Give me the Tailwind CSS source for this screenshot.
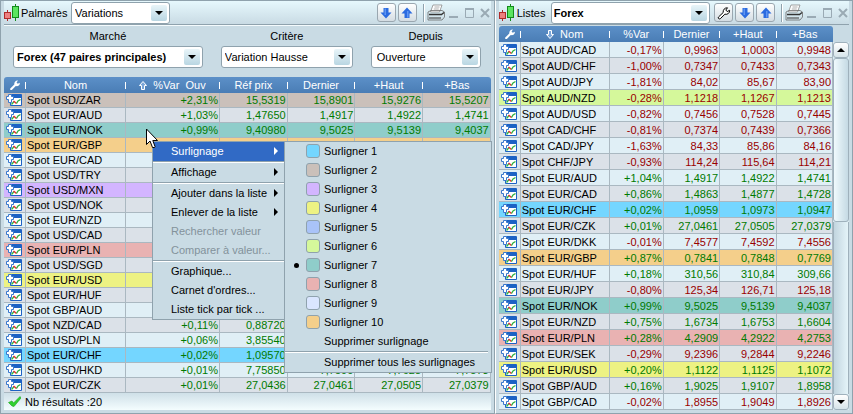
<!DOCTYPE html>
<html lang="fr">
<head>
<meta charset="utf-8">
<title>Palmarès et listes Forex</title>
<script src="https://cdn.jsdelivr.net/npm/@tailwindcss/browser@4"></script>
</head>
<body class="relative flex min-h-screen overflow-hidden bg-[#c9dbe4] font-['Liberation_Sans',Arial,sans-serif] text-[11px] leading-[14px] text-black">

<svg class="hidden" aria-hidden="true">
  <defs>
    <linearGradient id="barBlue" x1="0" y1="0" x2="1" y2="0"><stop offset="0" stop-color="#5f9fee"/><stop offset=".5" stop-color="#1458c0"/><stop offset="1" stop-color="#0a43a6"/></linearGradient>
    <linearGradient id="paperTray" x1="0" y1="0" x2="0" y2="1"><stop offset="0" stop-color="#f4f4f4"/><stop offset="1" stop-color="#8d8d8d"/></linearGradient>
  </defs>
  <symbol id="quote" viewBox="0 0 16 12">
    <rect x="4" y="0" width="12" height="12" rx="1" fill="#1c62c4"/>
    <rect x="4" y="0" width="12" height="4" rx="1" fill="url(#barBlue)"/>
    <rect x="5" y="4" width="10" height="7" fill="#fff"/>
    <path d="M5.500 10.500L8 7.500" stroke="#2fb040" stroke-width="1.300" fill="none"/>
    <path d="M7.500 7L10.500 9.500" stroke="#e63030" stroke-width="1.500" fill="none"/>
    <path d="M10.500 9.500L12 7L14.500 5.500" stroke="#2fb040" stroke-width="1.300" fill="none"/>
    <path d="M2.500 .5H5.500V2.500H7.500V5.500H5.500V8.500H2.500V5.500H.5V2.500H2.500Z" fill="#fff" stroke="#3a78cc" stroke-width="1"/>
  </symbol>
  <symbol id="candles" viewBox="0 0 16 20">
    <path d="M3.500 7V18" stroke="#b02a2a"/>
    <rect x=".5" y="9.500" width="6" height="6" fill="#ee8080" stroke="#b02a2a"/>
    <path d="M11.500 1V18" stroke="#128a1c"/>
    <rect x="8.500" y="3.500" width="6" height="11" fill="#5be45f" stroke="#128a1c"/>
  </symbol>
  <symbol id="wrench" viewBox="0 0 14 14">
    <path d="M1.500 11L6.200 6.500C5.800 4 7.600 1.600 10.500 1.800L8.800 4L10.200 5.600L12.600 4.300C13 7 10.400 8.900 7.900 8.200L3.300 12.700C2 13.500 .6 12 1.500 11Z"/>
  </symbol>
  <symbol id="arrowDown" viewBox="0 0 12 12">
    <path d="M3.500 1H8.500V5.500H11.500L6 11.500L.5 5.500H3.500Z" fill="#2b6be0"/>
    <path d="M4.500 1.500H6V8H4.500Z" fill="#5f95f2"/>
  </symbol>
  <symbol id="headArrow" viewBox="0 0 8 9">
    <path d="M2.500 .5H5.500V4.500H7.500L4 8.500L.5 4.500H2.500Z" fill="#7aa6d8" stroke="#fff"/>
  </symbol>
  <symbol id="printer" viewBox="0 0 18 17">
    <path d="M6 1H15L12.500 8H3.500Z" fill="#fff" stroke="#8a8a8a" stroke-width=".8"/>
    <path d="M7.500 3H12.500M6.800 5H11.800" stroke="#999" stroke-width=".8"/>
    <path d="M1 8L4 6.500H15L17.500 8V13L15 16H1Z" fill="url(#paperTray)" stroke="#6a6a6a" stroke-width=".8"/>
    <path d="M2 10.500H14.500L17 8.500" stroke="#333" stroke-width="1.400" fill="none"/>
    <path d="M2 14H14" stroke="#555" stroke-width="1.200"/>
  </symbol>
</svg>

<section class="flex min-w-0 flex-[496_1_0%] flex-col border-y border-l border-r border-[#8fa2ad] px-[3px] pb-[2px]">
  <header class="flex h-6 shrink-0 items-center border-b border-[#8fa2ad] bg-linear-to-b from-[#e6f8fd] to-[#c9dbe4] shadow-[0_1px_0_#f4fbfd]">
    <svg class="h-5 w-4 shrink-0"><use href="#candles"/></svg>
    <label for="view" class="ml-px w-[50px] shrink-0">Palmarès</label>
    <span class="relative w-[99px] shrink-0">
      <select id="view" class="block h-[22px] w-full appearance-none rounded-[3px] border border-[#8fa2ad] bg-white px-[3px]"><option>Variations</option></select>
      <svg class="pointer-events-none absolute top-[3px] right-[3px] size-4 rounded-[2px] bg-linear-to-b from-[#e9f5f9] to-[#b9d6e2]" viewBox="0 0 16 16"><path d="M4 6H12L8 10Z"/></svg>
    </span>
    <div class="ml-auto flex items-center">
      <button aria-label="Descendre" class="mr-[2px] flex size-[19px] items-center justify-center rounded-[3px] border border-[#9aa7b0] bg-linear-to-b from-white to-[#d4dde3]"><svg class="size-3"><use href="#arrowDown"/></svg></button>
      <button aria-label="Monter" class="mr-[6px] flex size-[19px] items-center justify-center rounded-[3px] border border-[#9aa7b0] bg-linear-to-b from-white to-[#d4dde3]"><svg class="size-3 rotate-180"><use href="#arrowDown"/></svg></button>
      <span class="mr-[2px] h-[18px] w-[2px] border-l border-[#8fa2ad] bg-white"></span>
      <button aria-label="Imprimer" class="mr-[4px]"><svg class="block h-[17px] w-[18px]"><use href="#printer"/></svg></button>
      <button aria-label="Réduire" class="mr-[6px]"><svg class="block size-[10px]" viewBox="0 0 10 10"><path d="M0 9H9" stroke="#9aaab4" stroke-width="2"/></svg></button>
      <button aria-label="Agrandir" class="mr-[5px]"><svg class="block size-[10px]" viewBox="0 0 10 10"><path d="M.5 1.500H8.500V9.500H.5Z" fill="none" stroke="#9aaab4"/><path d="M0 1H9" stroke="#9aaab4" stroke-width="2"/></svg></button>
      <button aria-label="Fermer" class="mr-px"><svg class="block size-[10px]" viewBox="0 0 10 10"><path d="M1 1L9 9M9 1L1 9" stroke="#9aaab4" stroke-width="2"/></svg></button>
    </div>
  </header>

  <div class="grid shrink-0 grid-cols-[190fr_132fr_110fr] gap-x-[18px] pt-1 pr-[10px] pb-[9px] pl-[9px]">
    <label for="market" class="text-center">Marché</label>
    <label for="criterion" class="text-center">Critère</label>
    <label for="since" class="text-center">Depuis</label>
    <span class="relative mt-[3px]">
      <select id="market" class="block h-[22px] w-full appearance-none rounded-[3px] border border-[#8fa2ad] bg-white px-[3px] font-bold"><option>Forex (47 paires principales)</option></select>
      <svg class="pointer-events-none absolute top-[3px] right-[3px] size-4 rounded-[2px] bg-linear-to-b from-[#e9f5f9] to-[#b9d6e2]" viewBox="0 0 16 16"><path d="M4 6H12L8 10Z"/></svg>
    </span>
    <span class="relative mt-[3px]">
      <select id="criterion" class="block h-[22px] w-full appearance-none rounded-[3px] border border-[#8fa2ad] bg-white px-[3px]"><option>Variation Hausse</option></select>
      <svg class="pointer-events-none absolute top-[3px] right-[3px] size-4 rounded-[2px] bg-linear-to-b from-[#e9f5f9] to-[#b9d6e2]" viewBox="0 0 16 16"><path d="M4 6H12L8 10Z"/></svg>
    </span>
    <span class="relative mt-[3px]">
      <select id="since" class="block h-[22px] w-full appearance-none rounded-[3px] border border-[#8fa2ad] bg-white px-[5px]"><option>Ouverture</option></select>
      <svg class="pointer-events-none absolute top-[3px] right-[3px] size-4 rounded-[2px] bg-linear-to-b from-[#e9f5f9] to-[#b9d6e2]" viewBox="0 0 16 16"><path d="M4 6H12L8 10Z"/></svg>
    </span>
  </div>

  <table class="w-full table-fixed border-separate border-spacing-0">
    <colgroup><col class="w-[22px]"><col class="w-[100px]"><col class="w-[94px]"><col><col><col><col></colgroup>
    <thead>
      <tr class="h-4 text-white [&>th]:bg-linear-to-b [&>th]:from-[#5c90c8] [&>th]:to-[#4a7db5] [&>th]:p-0 [&>th]:font-normal">
        <th class="rounded-tl-[3px]"><span class="flex h-4 items-center justify-end"><svg class="mr-1 size-3 fill-white"><use href="#wrench"/></svg><i class="h-[7px] w-px bg-white"></i></span></th>
        <th><span class="flex h-4 items-center"><b class="flex-1 font-normal">Nom</b><i class="h-[7px] w-px bg-white"></i></span></th>
        <th><span class="flex h-4 items-center"><b class="flex flex-1 items-center justify-center gap-[6px] font-normal"><svg class="h-[9px] w-2 rotate-180"><use href="#headArrow"/></svg><span>%Var&nbsp; Ouv</span></b><i class="h-[7px] w-px bg-white"></i></span></th>
        <th><span class="flex h-4 items-center"><b class="flex-1 font-normal">Réf prix</b><i class="h-[7px] w-px bg-white"></i></span></th>
        <th><span class="flex h-4 items-center"><b class="flex-1 font-normal">Dernier</b><i class="h-[7px] w-px bg-white"></i></span></th>
        <th><span class="flex h-4 items-center"><b class="flex-1 font-normal">+Haut</b><i class="h-[7px] w-px bg-white"></i></span></th>
        <th class="rounded-tr-[3px]">+Bas</th>
      </tr>
    </thead>
    <tbody id="ranking"></tbody>
  </table>

  <footer class="flex h-[17px] shrink-0 items-center bg-linear-to-b from-[#cfe0e8] to-[#f4fdfe] pl-1">
    <svg class="mr-1 h-[11px] w-[13px]" viewBox="0 0 13 11"><path d="M.5 6.500L4 5L5.500 7L12 .5L13 2L6 10.500L4 10Z" fill="#2fd02f" stroke="#1ca51c" stroke-width=".6"/></svg>
    <span>Nb résultats :20</span>
  </footer>
</section>

<section class="flex min-w-0 flex-[357_1_0%] flex-col border-y border-r border-l border-y-[#8fa2ad] border-r-[#8fa2ad] border-l-white pr-[3px] pb-[3px] pl-[3px]">
  <header class="flex h-6 shrink-0 items-center border-b border-[#8fa2ad] bg-linear-to-b from-[#e6f8fd] to-[#c9dbe4]">
    <svg class="h-5 w-4 shrink-0"><use href="#candles"/></svg>
    <label for="list" class="ml-[2px] w-[34px] shrink-0">Listes</label>
    <span class="relative mr-[4px] min-w-0 flex-1">
      <select id="list" class="block h-[22px] w-full appearance-none rounded-[3px] border border-[#8fa2ad] bg-white px-[2px] font-bold"><option>Forex</option></select>
      <svg class="pointer-events-none absolute top-[3px] right-[3px] size-4 rounded-[2px] bg-linear-to-b from-[#e9f5f9] to-[#b9d6e2]" viewBox="0 0 16 16"><path d="M4 6H12L8 10Z"/></svg>
    </span>
    <div class="flex items-center">
      <button aria-label="Paramètres" class="mr-[2px] flex size-[19px] items-center justify-center rounded-[3px] border border-[#9aa7b0] bg-linear-to-b from-white to-[#d4dde3]"><svg class="size-[14px] fill-white stroke-black"><use href="#wrench"/></svg></button>
      <button aria-label="Descendre" class="mr-[2px] flex size-[19px] items-center justify-center rounded-[3px] border border-[#9aa7b0] bg-linear-to-b from-white to-[#d4dde3]"><svg class="size-3"><use href="#arrowDown"/></svg></button>
      <button aria-label="Monter" class="mr-[6px] flex size-[19px] items-center justify-center rounded-[3px] border border-[#9aa7b0] bg-linear-to-b from-white to-[#d4dde3]"><svg class="size-3 rotate-180"><use href="#arrowDown"/></svg></button>
      <span class="mr-[2px] h-[18px] w-[2px] border-l border-[#8fa2ad] bg-white"></span>
      <button aria-label="Imprimer" class="mr-[4px]"><svg class="block h-[17px] w-[18px]"><use href="#printer"/></svg></button>
      <button aria-label="Réduire" class="mr-[6px]"><svg class="block size-[10px]" viewBox="0 0 10 10"><path d="M0 9H9" stroke="#9aaab4" stroke-width="2"/></svg></button>
      <button aria-label="Agrandir" class="mr-[5px]"><svg class="block size-[10px]" viewBox="0 0 10 10"><path d="M.5 1.500H8.500V9.500H.5Z" fill="none" stroke="#9aaab4"/><path d="M0 1H9" stroke="#9aaab4" stroke-width="2"/></svg></button>
      <button aria-label="Fermer" class="mr-px"><svg class="block size-[10px]" viewBox="0 0 10 10"><path d="M1 1L9 9M9 1L1 9" stroke="#9aaab4" stroke-width="2"/></svg></button>
    </div>
  </header>

  <div class="mt-px flex">
    <table class="min-w-0 flex-1 table-fixed border-separate border-spacing-0">
      <colgroup><col class="w-[22px]"><col class="w-[89px]"><col class="w-[54px]"><col><col><col></colgroup>
      <thead>
        <tr class="h-4 text-white [&>th]:bg-linear-to-b [&>th]:from-[#5c90c8] [&>th]:to-[#4a7db5] [&>th]:p-0 [&>th]:font-normal">
          <th class="rounded-tl-[3px]"><span class="flex h-4 items-center justify-end"><svg class="mr-1 size-3 fill-white"><use href="#wrench"/></svg><i class="h-[7px] w-px bg-white"></i></span></th>
          <th><span class="flex h-4 items-center"><b class="flex flex-1 items-center justify-center gap-[6px] font-normal"><svg class="h-[9px] w-2"><use href="#headArrow"/></svg><span>Nom</span></b><i class="h-[7px] w-px bg-white"></i></span></th>
          <th><span class="flex h-4 items-center"><b class="flex-1 font-normal">%Var</b><i class="h-[7px] w-px bg-white"></i></span></th>
          <th><span class="flex h-4 items-center"><b class="flex-1 font-normal">Dernier</b><i class="h-[7px] w-px bg-white"></i></span></th>
          <th><span class="flex h-4 items-center"><b class="flex-1 font-normal">+Haut</b><i class="h-[7px] w-px bg-white"></i></span></th>
          <th class="rounded-tr-[3px]">+Bas</th>
        </tr>
      </thead>
      <tbody id="quotes"></tbody>
    </table>
    <div class="mt-4 flex w-4 shrink-0 flex-col bg-[#dbecf3]">
      <button aria-label="Défiler vers le haut" class="flex h-4 shrink-0 items-center justify-center rounded-[3px] border border-[#9fb1bc] bg-linear-to-b from-white to-[#d6e4ea]"><svg class="h-1 w-2" viewBox="0 0 8 4"><path d="M0 4H8L4 0Z"/></svg></button>
      <div class="flex-[163_1_0%] rounded-[3px] border border-[#9fb1bc] bg-linear-to-r from-[#f0fafd] to-[#c5dae4]"></div>
      <div class="flex-[173_1_0%] border-x border-[#9fb1bc] bg-linear-to-r from-[#c2d5df] to-[#e4f4f9]"></div>
      <button aria-label="Défiler vers le bas" class="flex h-4 shrink-0 items-center justify-center rounded-[3px] border border-[#9fb1bc] bg-linear-to-b from-white to-[#d6e4ea]"><svg class="h-1 w-2" viewBox="0 0 8 4"><path d="M0 0H8L4 4Z"/></svg></button>
    </div>
  </div>
</section>

<!-- Context menu and its highlight submenu -->
<ul role="menu" class="absolute top-[141px] left-[152px] w-[133px] border border-[#8fa2ad] bg-[#c9dbe4] [&_button]:flex [&_button]:h-[19px] [&_button]:w-full [&_button]:items-center [&_button]:justify-between [&_button]:pr-[6px] [&_button]:pb-px [&_button]:pl-[18px]">
  <li class="border-b border-[#8fa2ad] bg-[#316ac5] text-white"><button role="menuitem">Surlignage<svg class="h-2 w-1 fill-white" viewBox="0 0 4 8"><path d="M0 0L4 4L0 8Z"/></svg></button></li>
  <li class="border-y border-t-white border-b-[#8fa2ad]"><button role="menuitem">Affichage<svg class="h-2 w-1" viewBox="0 0 4 8"><path d="M0 0L4 4L0 8Z"/></svg></button></li>
  <li class="border-t border-white"><button role="menuitem">Ajouter dans la liste<svg class="h-2 w-1" viewBox="0 0 4 8"><path d="M0 0L4 4L0 8Z"/></svg></button></li>
  <li><button role="menuitem">Enlever de la liste<svg class="h-2 w-1" viewBox="0 0 4 8"><path d="M0 0L4 4L0 8Z"/></svg></button></li>
  <li class="text-[#83929b]"><button role="menuitem" disabled>Rechercher valeur</button></li>
  <li class="border-b border-[#8fa2ad] text-[#83929b]"><button role="menuitem" disabled>Comparer à valeur...</button></li>
  <li class="border-t border-white"><button role="menuitem">Graphique...</button></li>
  <li><button role="menuitem">Carnet d'ordres...</button></li>
  <li><button role="menuitem">Liste tick par tick ...</button></li>
</ul>
<ul id="submenu" role="menu" class="absolute top-[141px] left-[284px] w-[208px] border border-[#8fa2ad] bg-[#c9dbe4]"></ul>

<!-- Mouse pointer -->
<svg class="pointer-events-none absolute top-[128px] left-[146px] h-[21px] w-3" viewBox="0 0 12 21"><path d="M.5 1V16.500L4 13L6.500 19.500H8.500L9 18.500L6.800 12.500H11.500Z" fill="#fff" stroke="#000"/></svg>

<script>
const fills = {
  light: 'bg-[#e0eff6]', grey: 'bg-[#dbe1e8]', blue: 'bg-[#74d6ff]', brown: 'bg-[#cac0ba]',
  purple: 'bg-[#d3b5ff]', yellow: 'bg-[#edf283]', indigo: 'bg-[#a9c3f8]', green: 'bg-[#d5f89b]',
  teal: 'bg-[#8fcdca]', pink: 'bg-[#e9b2b2]', lavender: 'bg-[#dae6ff]', orange: 'bg-[#f4cf8b]'
};
const ranking = [
  'USD/ZAR|+2,31%|15,5319|15,8901|15,9276|15,5207|brown',
  'EUR/AUD|+1,03%|1,47650|1,4917|1,4922|1,4741|',
  'EUR/NOK|+0,99%|9,40980|9,5025|9,5139|9,4037|teal',
  'EUR/GBP|||||| orange', 'EUR/CAD||||||', 'USD/TRY||||||', 'USD/MXN|||||| purple', 'USD/NOK||||||',
  'EUR/NZD||||||', 'USD/CAD||||||', 'EUR/PLN|||||| pink', 'USD/SGD||||||', 'EUR/USD|||||| yellow',
  'EUR/HUF||||||', 'GBP/AUD||||||',
  'NZD/CAD|+0,11%|0,88720||||', 'USD/PLN|+0,06%|3,85540||||',
  'EUR/CHF|+0,02%|1,09570||||blue',
  'USD/HKD|+0,01%|7,75850|7,7590|7,7628|7,7573|',
  'EUR/CZK|+0,01%|27,0436|27,0461|27,0505|27,0379|'
];
const quotes = [
  'AUD/CAD|-0,17%|0,9963|1,0003|0,9948|', 'AUD/CHF|-1,00%|0,7347|0,7433|0,7343|',
  'AUD/JPY|-1,81%|84,02|85,67|83,90|', 'AUD/NZD|-0,28%|1,1218|1,1267|1,1213|green',
  'AUD/USD|-0,82%|0,7456|0,7528|0,7445|', 'CAD/CHF|-0,81%|0,7374|0,7439|0,7366|',
  'CAD/JPY|-1,63%|84,33|85,86|84,16|', 'CHF/JPY|-0,93%|114,24|115,64|114,21|',
  'EUR/AUD|+1,04%|1,4917|1,4922|1,4741|', 'EUR/CAD|+0,86%|1,4863|1,4877|1,4728|',
  'EUR/CHF|+0,02%|1,0959|1,0973|1,0947|blue', 'EUR/CZK|+0,01%|27,0461|27,0505|27,0379|',
  'EUR/DKK|-0,01%|7,4577|7,4592|7,4556|', 'EUR/GBP|+0,87%|0,7841|0,7848|0,7769|orange',
  'EUR/HUF|+0,18%|310,56|310,84|309,66|', 'EUR/JPY|-0,80%|125,34|126,71|125,18|',
  'EUR/NOK|+0,99%|9,5025|9,5139|9,4037|teal', 'EUR/NZD|+0,75%|1,6734|1,6753|1,6604|',
  'EUR/PLN|+0,28%|4,2909|4,2922|4,2753|pink', 'EUR/SEK|-0,29%|9,2396|9,2844|9,2246|',
  'EUR/USD|+0,20%|1,1122|1,1125|1,1072|yellow', 'GBP/AUD|+0,16%|1,9025|1,9107|1,8958|',
  'GBP/CAD|-0,02%|1,8955|1,9049|1,8926|'
];
const cell = 'border-r border-b border-[#aab8c1] p-0';
function fillTable(id, rows, columns, height) {
  document.getElementById(id).innerHTML = rows.map((line, i) => {
    const f = line.split('|');
    const fill = fills[f[f.length - 1].trim()] || (i % 2 ? fills.grey : fills.light);
    const tone = f[1][0] === '-' ? 'text-[#990000]' : 'text-[#007a00]';
    const nums = f.slice(1, columns).map(v => `<td class="${cell} pr-px text-right ${tone}">${v}</td>`).join('');
    return `<tr class="${height} ${fill}"><td class="${cell}"><svg class="ml-[2px] block h-3 w-4"><use href="#quote"/></svg></td><td class="${cell} pl-px whitespace-nowrap">Spot ${f[0]}</td>${nums}</tr>`;
  }).join('');
}
fillTable('ranking', ranking, 6, 'h-[15px]');
fillTable('quotes', quotes, 5, 'h-4');

const palette = ['blue', 'brown', 'purple', 'yellow', 'indigo', 'green', 'teal', 'pink', 'lavender', 'orange'];
document.getElementById('submenu').innerHTML = palette.map((name, i) =>
  `<li><button role="menuitemradio" aria-checked="${i === 6}" class="flex h-[19px] w-full items-center pb-px pl-[9px]"><i class="mr-[7px] size-[5px] rounded-full ${i === 6 ? 'bg-black' : ''}"></i><i class="mr-1 size-[14px] rounded-[3px] border border-[#8fa2ad] ${fills[name]}"></i>Surligner ${i + 1}</button></li>`
).join('') +
  '<li class="mr-[3px] border-b border-[#8fa2ad]"><button role="menuitem" class="flex h-[19px] w-full items-center pb-px pl-[39px]">Supprimer surlignage</button></li>' +
  '<li class="mr-[3px] border-t border-white"><button role="menuitem" class="flex h-[19px] w-full items-center pb-px pl-[39px]">Supprimer tous les surlignages</button></li>';
</script>
</body>
</html>
